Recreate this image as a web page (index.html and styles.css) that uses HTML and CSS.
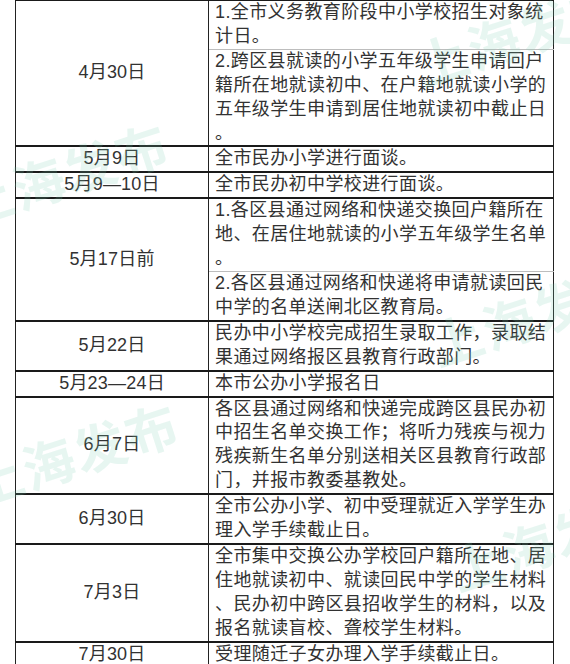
FILE: index.html
```html
<!DOCTYPE html>
<html lang="zh-CN">
<head>
<meta charset="utf-8">
<title>招生日程</title>
<link rel="stylesheet" href="styles.css">
</head>
<body>
<div class="page">
  <div class="wm wm1">上海发布</div>
  <div class="wm wm2">上海发布</div>
  <div class="wm wm3">上海发布</div>
  <div class="wm wm4">上海发布</div>
  <div class="wm wm5">上海发布</div>
  <table class="sched">
    <colgroup><col class="c-date"><col class="c-text"></colgroup>
    <tr class="r-first">
      <td class="date" rowspan="2">4月30日</td>
      <td class="txt sub-top">1.全市义务教育阶段中小学校招生对象统<br>计日。</td>
    </tr>
    <tr>
      <td class="txt sub-bot">2.跨区县就读的小学五年级学生申请回户<br>籍所在地就读初中、在户籍地就读小学的<br>五年级学生申请到居住地就读初中截止日<br>。</td>
    </tr>
    <tr>
      <td class="date">5月9日</td>
      <td class="txt">全市民办小学进行面谈。</td>
    </tr>
    <tr>
      <td class="date">5月9—10日</td>
      <td class="txt">全市民办初中学校进行面谈。</td>
    </tr>
    <tr>
      <td class="date" rowspan="2">5月17日前</td>
      <td class="txt sub-top">1.各区县通过网络和快递交换回户籍所在<br>地、在居住地就读的小学五年级学生名单<br>。</td>
    </tr>
    <tr>
      <td class="txt sub-bot">2.各区县通过网络和快递将申请就读回民<br>中学的名单送闸北区教育局。</td>
    </tr>
    <tr>
      <td class="date">5月22日</td>
      <td class="txt">民办中小学校完成招生录取工作，录取结<br>果通过网络报区县教育行政部门。</td>
    </tr>
    <tr>
      <td class="date">5月23—24日</td>
      <td class="txt">本市公办小学报名日</td>
    </tr>
    <tr>
      <td class="date">6月7日</td>
      <td class="txt">各区县通过网络和快递完成跨区县民办初<br>中招生名单交换工作；将听力残疾与视力<br>残疾新生名单分别送相关区县教育行政部<br>门，并报市教委基教处。</td>
    </tr>
    <tr>
      <td class="date">6月30日</td>
      <td class="txt">全市公办小学、初中受理就近入学学生办<br>理入学手续截止日。</td>
    </tr>
    <tr>
      <td class="date">7月3日</td>
      <td class="txt">全市集中交换公办学校回户籍所在地、居<br>住地就读初中、就读回民中学的学生材料<br>、民办初中跨区县招收学生的材料，以及<br>报名就读盲校、聋校学生材料。</td>
    </tr>
    <tr>
      <td class="date">7月30日</td>
      <td class="txt">受理随迁子女办理入学手续截止日。</td>
    </tr>
  </table>
</div>
</body>
</html>
```
FILE: styles.css
```css
html, body {
  margin: 0;
  padding: 0;
  background: #ffffff;
}
.page {
  position: relative;
  width: 570px;
  height: 664px;
  overflow: hidden;
}
.sched {
  position: relative;
  margin: -1px 0 0 15px;
  width: 538px;
  border-collapse: collapse;
  font-family: "Liberation Sans", "Noto Sans CJK SC", sans-serif;
  font-size: 18px;
  color: #323232;
  table-layout: fixed;
}
.c-date { width: 193px; }
.c-text { width: 345px; }
.sched td {
  border-top: 2px solid #1a1a1a;
  border-bottom: 2px solid #1a1a1a;
  border-left: 1px solid #222;
  border-right: 1px solid #222;
  line-height: 23.9px;
  padding: 0;
  vertical-align: middle;
  white-space: nowrap;
}
.sched td.date {
  text-align: center;
  letter-spacing: 0.2px;
}
.sched td.txt {
  padding: 0 0 0 6px;
  letter-spacing: 0.4px;
}
.sched td.sub-top {
  border-bottom: 1px solid #bdbdbd;
}
.sched td.sub-bot {
  border-top: 1px solid #bdbdbd;
}
.wm {
  position: absolute;
  z-index: 1;
  font-family: "Noto Sans CJK SC", sans-serif;
  font-weight: 700;
  font-size: 52px;
  letter-spacing: 2px;
  color: rgba(120, 205, 175, 0.18);
  transform: rotate(-18deg);
  transform-origin: left top;
  pointer-events: none;
  white-space: nowrap;
}
.wm1 { left: 405px; top: 30px; }
.wm2 { left: -50px; top: 170px; }
.wm3 { left: 420px; top: 310px; }
.wm4 { left: -40px; top: 450px; }
.wm5 { left: 440px; top: 535px; }
```
